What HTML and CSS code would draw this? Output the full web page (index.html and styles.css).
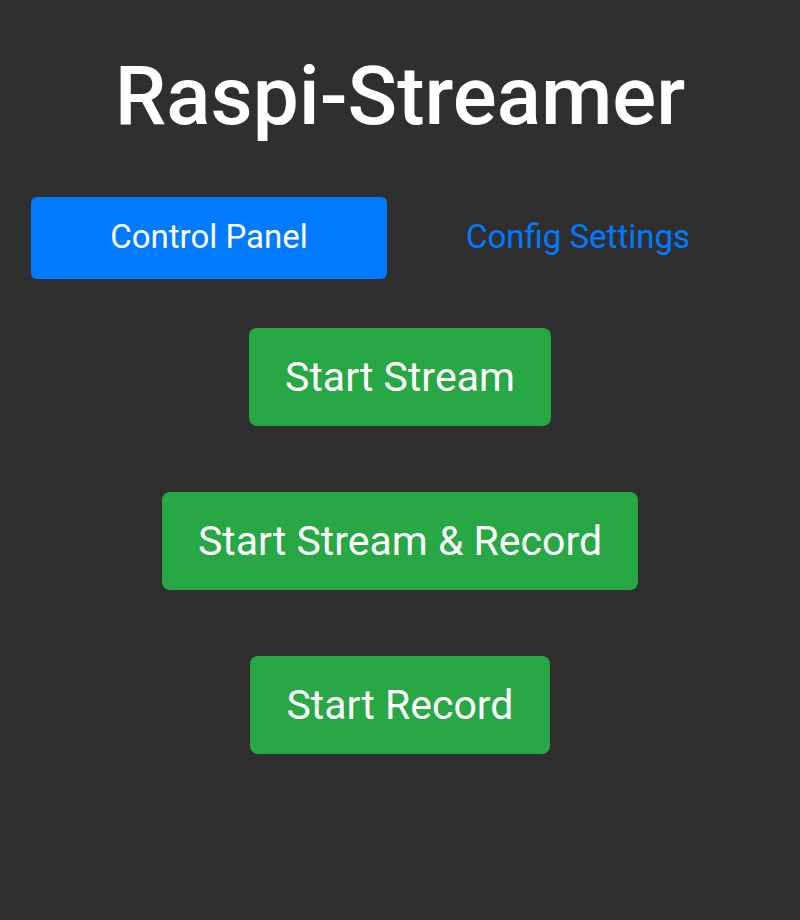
FILE: index.html
```html
<!DOCTYPE html>
<html lang="en">
<head>
<meta charset="utf-8">
<title>Raspi-Streamer</title>
<link rel="stylesheet" href="styles.css">
</head>
<body>
<main class="app">
  <h1 class="title">Raspi-Streamer</h1>
  <nav class="tabs">
    <a class="tab active">Control Panel</a>
    <a class="tab">Config Settings</a>
  </nav>
  <section class="actions">
    <button class="btn">Start Stream</button>
    <button class="btn">Start Stream &amp; Record</button>
    <button class="btn">Start Record</button>
  </section>
</main>
</body>
</html>
```

FILE: styles.css
```css
html, body {
  margin: 0;
  padding: 0;
  background: #2f2f2f;
  font-family: Roboto, "Liberation Sans", sans-serif;
  color: #fff;
}
.app {
  width: 800px;
  height: 920px;
  display: flex;
  flex-direction: column;
  align-items: center;
}
.title {
  margin: 46px 0 0 0;
  font-size: 82px;
  font-weight: 500;
  line-height: 100px;
  letter-spacing: 0;
}
.tabs {
  margin-top: 51px;
  width: 100%;
  box-sizing: border-box;
  padding: 0 44px 0 31px;
  display: flex;
  gap: 13px;
}
.tab {
  flex: 1;
  height: 82px;
  box-sizing: border-box;
  padding-bottom: 3px;
  display: flex;
  align-items: center;
  justify-content: center;
  border-radius: 6px;
  font-size: 33px;
  color: #007bff;
  cursor: pointer;
}
.tab.active {
  background: #007bff;
  color: #fff;
}
.actions {
  margin-top: 49px;
  display: flex;
  flex-direction: column;
  align-items: center;
  gap: 66px;
}
.btn {
  height: 98px;
  padding: 0 36px;
  border: none;
  border-radius: 8px;
  background: #28a745;
  color: #fff;
  font-family: Roboto, "Liberation Sans", sans-serif;
  font-size: 41px;
  cursor: pointer;
}
```
